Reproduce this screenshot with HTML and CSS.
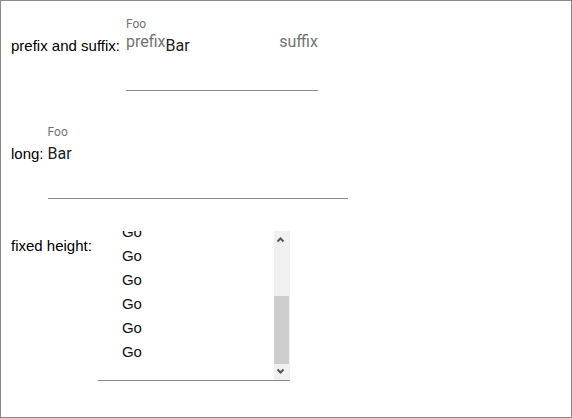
FILE: index.html
```html
<!DOCTYPE html>
<html>
<head>
<meta charset="utf-8">
<link rel="stylesheet" href="styles.css">
</head>
<body>
<div class="frame">
  <div class="row row-prefix">
    <span class="label">prefix and suffix:</span>
    <div class="field field-short">
      <div class="float-label">Foo</div>
      <div class="input-row">
        <span class="affix">prefix</span><span class="value">Bar</span><span class="affix suffix">suffix</span>
      </div>
    </div>
  </div>
  <div class="row row-long">
    <span class="label">long:</span>
    <div class="field field-long">
      <div class="float-label">Foo</div>
      <div class="input-row">
        <span class="value">Bar</span>
      </div>
    </div>
  </div>
  <div class="row row-fixed">
    <span class="label label-fixed">fixed height:</span>
    <div class="textarea">
      <div class="scroller">
        <div class="lines">
          <div class="line">Go</div>
          <div class="line">Go</div>
          <div class="line">Go</div>
          <div class="line">Go</div>
          <div class="line">Go</div>
          <div class="line">Go</div>
          <div class="line">Go</div>
          <div class="line">Go</div>
          <div class="line">Go</div>
          <div class="line">Go</div>
        </div>
      </div>
      <div class="scrollbar">
        <div class="sb-button">
          <svg width="16" height="16" viewBox="0 0 16 16"><polyline points="3.5,10.5 6.5,7.5 9.5,10.5" fill="none" stroke="#555" stroke-width="2"/></svg>
        </div>
        <div class="sb-track">
          <div class="sb-thumb"></div>
        </div>
        <div class="sb-button">
          <svg width="16" height="16" viewBox="0 0 16 16"><polyline points="3.5,5.5 6.5,8.5 9.5,5.5" fill="none" stroke="#555" stroke-width="2"/></svg>
        </div>
      </div>
    </div>
  </div>
</div>
</body>
</html>
```
FILE: styles.css
```css
html, body {
  margin: 0;
  padding: 0;
  background: #fff;
}
.frame {
  box-sizing: border-box;
  width: 572px;
  height: 418px;
  border: 1px solid #8a8a8a;
  padding: 16px 0 0 10px;
  display: flex;
  flex-direction: column;
  font-family: "Liberation Sans", Arial, sans-serif;
  color: #000;
}
.row {
  display: flex;
  align-items: flex-start;
  gap: 4px;
}
.row-long {
  margin-top: 34px;
}
.row-fixed {
  margin-top: 32px;
}
.label {
  font-size: 15px;
  line-height: 18px;
  margin-top: 20px;
}
.row-prefix .label {
  margin-right: 2px;
}
.label-fixed {
  margin-top: 6px;
  margin-right: 2px;
}
.field {
  box-sizing: border-box;
  border-bottom: 1px solid #8a8a8a;
  padding-bottom: 32px;
  font-family: Roboto, "Liberation Sans", sans-serif;
}
.field-short {
  width: 192px;
}
.field-long {
  width: 300px;
}
.float-label {
  font-size: 12px;
  line-height: 14px;
  color: #737373;
}
.input-row {
  margin-top: 3px;
  display: flex;
  align-items: baseline;
  font-size: 16px;
  line-height: 24px;
}
.value {
  color: #212121;
}
.affix {
  color: #737373;
  position: relative;
  top: -4px;
}
.suffix {
  margin-left: auto;
}
.textarea {
  box-sizing: border-box;
  width: 192px;
  height: 150px;
  border-bottom: 1px solid #8a8a8a;
  display: flex;
}
.scroller {
  flex: 1;
  height: 149px;
  overflow-y: auto;
  scrollbar-width: none;
  display: flex;
  flex-direction: column-reverse;
}
.scroller::-webkit-scrollbar {
  display: none;
}
.lines {
  padding: 3px 0 16px 24px;
  font-size: 15px;
  line-height: 24px;
  color: #111;
}
.scrollbar {
  width: 16px;
  height: 149px;
  background: #f0f0f0;
  display: flex;
  flex-direction: column;
}
.sb-button {
  height: 16px;
  flex: none;
}
.sb-button svg {
  display: block;
}
.sb-track {
  flex: 1;
  display: flex;
  flex-direction: column;
  justify-content: flex-end;
}
.sb-thumb {
  height: 68px;
  width: 15px;
  background: #cdcdcd;
}
```
